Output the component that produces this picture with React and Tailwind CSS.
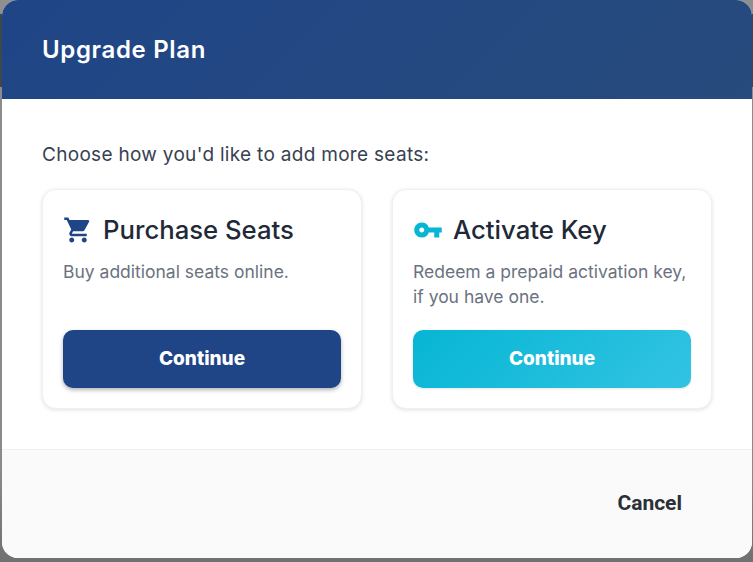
import { MdShoppingCart, MdVpnKey } from 'react-icons/md'

function OptionCard({ icon, title, text, buttonClass }) {
  return (
    <div className="flex h-[220px] w-[320px] flex-col rounded-[14px] border border-[#f0f0f0] bg-white px-5 pt-[20px] shadow-[0_1px_4px_rgba(0,0,0,0.12)]">
      <div className="flex h-[40px] items-center gap-[10px]">
        {icon}
        <h3 className="text-[25.7px] leading-[40px] font-medium text-[#1f2937]">{title}</h3>
      </div>
      <p className="mt-[9px] h-[50px] text-[17.5px] leading-[25px] text-[#6b7280]">{text}</p>
      <button type="button" className={`mt-[21px] h-[58px] w-full rounded-[10px] text-[19px] font-extrabold text-white ${buttonClass}`}>
        Continue
      </button>
    </div>
  )
}

export default function App() {
  return (
    <div className="h-[562px] w-[753px] overflow-hidden bg-[linear-gradient(180deg,#8f8f8f_0px,#8f8f8f_14px,#3f4650_14px,#3f4650_87px,#8c8c8c_87px,#8a8a8a_470px,#707070_562px)] pr-[1px] pl-[2px] font-['Inter','Noto_Sans',sans-serif]">
      <div className="flex h-[558px] flex-col overflow-hidden rounded-[16px] bg-white">
        <div className="flex h-[99px] items-center bg-[linear-gradient(135deg,#1f4587,#274b7c)] px-[40px]">
          <h2 className="text-[24px] font-semibold tracking-[0.65px] text-white">Upgrade Plan</h2>
        </div>
        <div className="flex-1 px-[40px] pt-[43px]">
          <p className="text-[19px] leading-[26px] tracking-[0.3px] text-[#374151]">Choose how you'd like to add more seats:</p>
          <div className="mt-[21px] flex gap-[30px]">
            <OptionCard
              icon={<MdShoppingCart className="size-[30px] shrink-0 text-[#1f4587]" />}
              title="Purchase Seats"
              text="Buy additional seats online."
              buttonClass="bg-[#1f4587] shadow-[0_2px_4px_rgba(0,0,0,0.3)]"
            />
            <OptionCard
              icon={<MdVpnKey className="size-[30px] shrink-0 text-[#06b6d4]" />}
              title="Activate Key"
              text={<>Redeem a prepaid activation key,<br />if you have one.</>}
              buttonClass="bg-[linear-gradient(135deg,#06b6d4,#33c3e3)] shadow-[0_1px_3px_rgba(0,0,0,0.1)]"
            />
          </div>
        </div>
        <div className="flex h-[109px] items-center justify-end border-t border-[#f0f0f0] bg-[#fafafa] pr-[70px]">
          <button type="button" className="font-['Roboto',sans-serif] text-[21px] font-bold text-[#2b2f36]">Cancel</button>
        </div>
      </div>
    </div>
  )
}
